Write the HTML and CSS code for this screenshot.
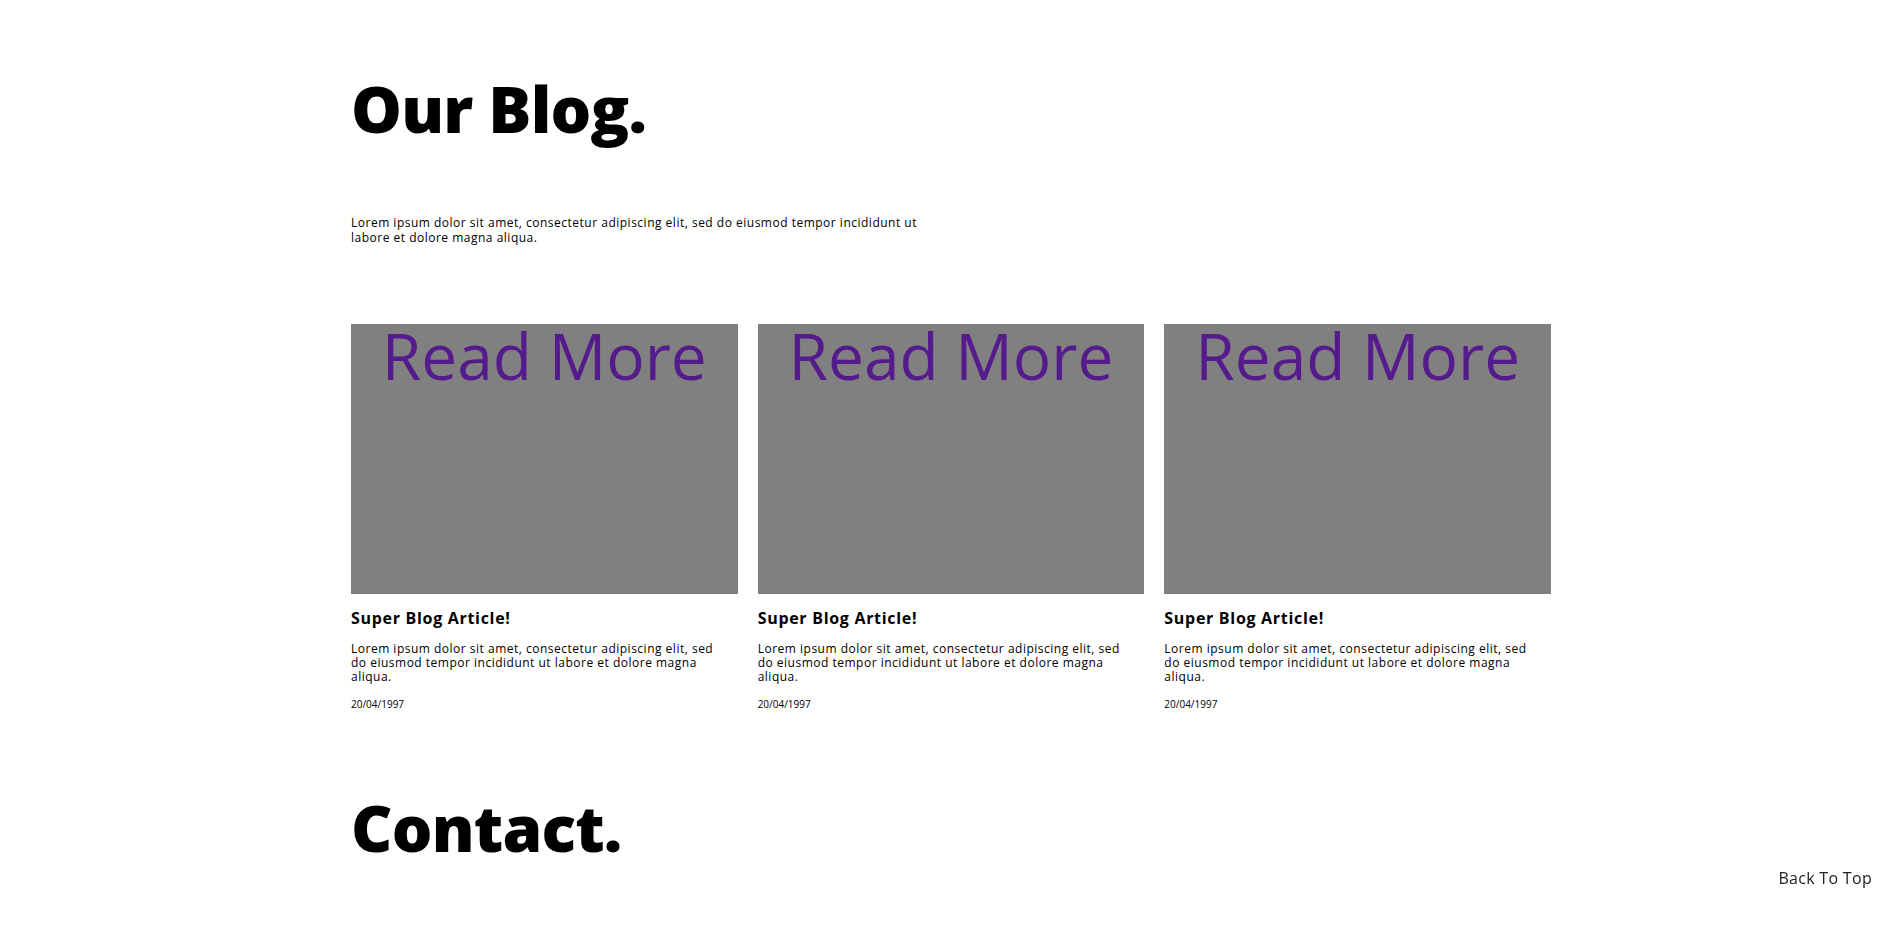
FILE: index.html
```html
<!DOCTYPE html>
<html lang="en">
<head>
<meta charset="utf-8">
<title>Our Blog</title>
<link rel="stylesheet" href="styles.css">
</head>
<body>
<main class="page">
  <section class="blog">
    <h1 class="heading">Our Blog.</h1>
    <p class="intro">Lorem ipsum dolor sit amet, consectetur adipiscing elit, sed do eiusmod tempor incididunt ut labore et dolore magna aliqua.</p>
    <div class="cards">
      <article class="card">
        <a class="thumb" href="#">Read More</a>
        <h3 class="card-title">Super Blog Article!</h3>
        <p class="card-text">Lorem ipsum dolor sit amet, consectetur adipiscing elit, sed do eiusmod tempor incididunt ut labore et dolore magna aliqua.</p>
        <p class="card-date">20/04/1997</p>
      </article>
      <article class="card">
        <a class="thumb" href="#">Read More</a>
        <h3 class="card-title">Super Blog Article!</h3>
        <p class="card-text">Lorem ipsum dolor sit amet, consectetur adipiscing elit, sed do eiusmod tempor incididunt ut labore et dolore magna aliqua.</p>
        <p class="card-date">20/04/1997</p>
      </article>
      <article class="card">
        <a class="thumb" href="#">Read More</a>
        <h3 class="card-title">Super Blog Article!</h3>
        <p class="card-text">Lorem ipsum dolor sit amet, consectetur adipiscing elit, sed do eiusmod tempor incididunt ut labore et dolore magna aliqua.</p>
        <p class="card-date">20/04/1997</p>
      </article>
    </div>
  </section>
  <section class="contact">
    <h1 class="heading">Contact.</h1>
  </section>
</main>
<a class="back-top" href="#">Back To Top</a>
</body>
</html>
```
FILE: styles.css
```css
* { box-sizing: border-box; }
html, body { margin: 0; padding: 0; background: #fff; }
body {
  font-family: "Open Sans", "Liberation Sans", sans-serif;
  color: #000;
  height: 934px;
  overflow: hidden;
}
.page {
  width: 1200px;
  margin: 0 auto;
}
.blog { padding-top: 77px; }
.heading {
  margin: 0;
  font-size: 64px;
  line-height: 64px;
  font-weight: 800;
  letter-spacing: -0.8px;
}
.intro {
  margin: 74px 0 0;
  width: 600px;
  font-size: 12px;
  line-height: 15px;
  letter-spacing: 0.5px;
}
.cards {
  margin-top: 79px;
  display: grid;
  grid-template-columns: repeat(3, 1fr);
  gap: 20px;
}
.thumb {
  display: block;
  height: 270px;
  background: #808080;
  color: #551a8b;
  text-decoration: none;
  text-align: center;
  font-size: 64px;
  line-height: 64px;
}
.card-title {
  margin: 14px 0 0;
  font-size: 16px;
  line-height: 20px;
  font-weight: 700;
  letter-spacing: 0.7px;
}
.card-text {
  margin: 14px 0 0;
  width: 372px;
  font-size: 12px;
  line-height: 14px;
  letter-spacing: 0.5px;
}
.card-date {
  margin: 14px 0 0;
  font-size: 10px;
  line-height: 12px;
}
.contact { padding-top: 86px; }
.back-top {
  position: fixed;
  right: 30px;
  bottom: 46px;
  font-size: 16px;
  line-height: 20px;
  letter-spacing: 0.3px;
  color: #222;
  text-decoration: none;
}
```
